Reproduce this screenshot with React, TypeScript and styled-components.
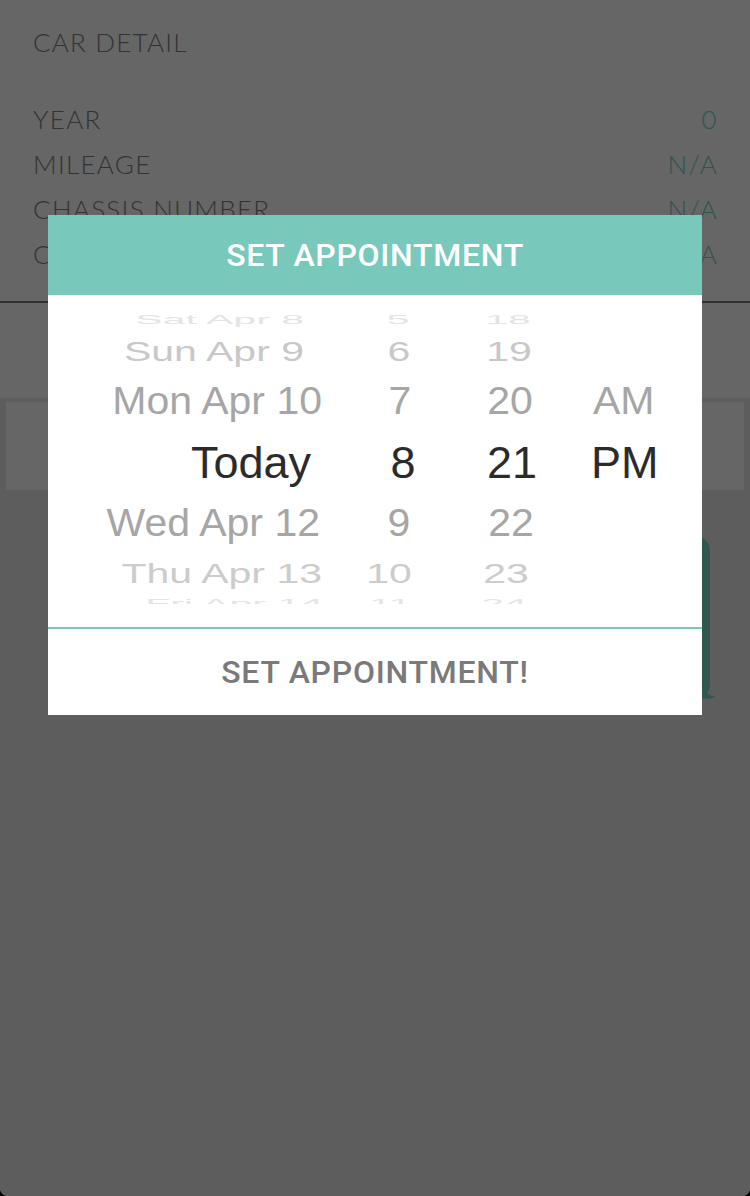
import React from "react";
import styled, { createGlobalStyle } from "styled-components";

const GlobalStyle = createGlobalStyle`
  html, body {
    margin: 0;
    padding: 0;
    background: #000;
  }
  * { box-sizing: border-box; }
`;

const Page = styled.div`
  position: relative;
  width: 750px;
  height: 1196px;
  overflow: hidden;
  background: #e9e9e9;
  border-radius: 0 0 8px 8px;
  display: flex;
  flex-direction: column;
  font-family: Lato, "Liberation Sans", sans-serif;
`;

const DetailSection = styled.section`
  background: #fff;
  padding: 27px 33px 25px;
  border-bottom: 2px solid #7c7c7c;
`;

const SectionTitle = styled.h2`
  margin: 0 0 39px;
  height: 30px;
  line-height: 30px;
  font-size: 26px;
  font-weight: 300;
  color: #808080;
  letter-spacing: 1.2px;
`;

const DetailRow = styled.div`
  display: flex;
  justify-content: space-between;
  align-items: center;
  height: 45px;
  font-size: 26px;
  font-weight: 300;
  letter-spacing: 1.3px;
`;

const Label = styled.span`
  color: #808080;
`;

const Value = styled.span`
  color: #74d2c0;
  margin-right: -1px;
`;

const WhiteStrip = styled.div`
  height: 95px;
  background: #fff;
`;

const LowerArea = styled.div`
  flex: 1;
  padding: 4px 6px 0;
  display: flex;
  flex-direction: column;
`;

const InputCard = styled.div`
  height: 88px;
  background: #fff;
`;

const Bubble = styled.div`
  position: relative;
  margin: 45px 0 0 54px;
  width: 650px;
  height: 165px;
  background: #7ad9c8;
  border-radius: 16px;
`;

const BubbleTail = styled.svg`
  position: absolute;
  right: -8px;
  bottom: 0;
  width: 20px;
  height: 26px;
`;

const Overlay = styled.div`
  position: absolute;
  inset: 0;
  background: rgba(0, 0, 0, 0.6);
`;

const Modal = styled.div`
  position: absolute;
  left: 48px;
  top: 215px;
  width: 654px;
  background: #fff;
  display: flex;
  flex-direction: column;
`;

const ModalHeader = styled.div`
  height: 80px;
  background: #78c9bc;
  display: flex;
  align-items: center;
  justify-content: center;
  color: #fff;
  font-family: Roboto, "Liberation Sans", sans-serif;
  font-weight: 500;
  font-size: 32px;
  letter-spacing: 0.7px;
`;

const Picker = styled.div`
  height: 334px;
  padding-top: 17px;
  border-bottom: 2px solid #78c9bc;
  font-family: "Liberation Sans", Arial, sans-serif;
`;

const Wheel = styled.div`
  height: 292px;
  overflow: hidden;
  display: grid;
  grid-template-columns: 272px 162px 56px 1fr;
`;

const WheelColumn = styled.div<{ $pad?: number }>`
  display: flex;
  flex-direction: column;
  margin-top: -2px;
  padding-left: ${(p) => p.$pad ?? 0}px;
`;

const WheelItem = styled.div<{
  $h: number;
  $size: number;
  $color: string;
  $sy: number;
  $dx: number;
  $align: string;
}>`
  height: ${(p) => p.$h}px;
  flex: none;
  display: flex;
  align-items: center;
  justify-content: ${(p) => p.$align};
  font-size: ${(p) => p.$size}px;
  line-height: 1;
  color: ${(p) => p.$color};
  white-space: nowrap;
  transform: translateX(${(p) => p.$dx}px) scaleY(${(p) => p.$sy});
`;

const Footer = styled.button`
  height: 86px;
  border: 0;
  background: #fff;
  display: flex;
  align-items: center;
  justify-content: center;
  color: #7a7a7a;
  font-family: Roboto, "Liberation Sans", sans-serif;
  font-weight: 500;
  font-size: 32px;
  letter-spacing: 0.75px;
  padding: 0;
  cursor: pointer;
`;

const rowHeights = [20, 42, 58, 64, 58, 42, 20];
const rowScale = [0.3, 0.68, 0.93, 1, 0.93, 0.68, 0.3];
const rowColor = ["#e4e4e4", "#c8c8c8", "#a6a6a6", "#2b2b2b", "#a6a6a6", "#cccccc", "#e4e4e4"];
const rowSize = [41, 41, 41, 45, 41, 41, 41];

type Col = { items: string[]; dx: number[]; align: string; pad?: number };

const columns: Col[] = [
  {
    items: ["Sat Apr 8", "Sun Apr 9", "Mon Apr 10", "Today", "Wed Apr 12", "Thu Apr 13", "Fri Apr 14"],
    dx: [-16, -16, 2, -9, 0, 2, 3],
    align: "flex-end",
  },
  {
    items: ["5", "6", "7", "8", "9", "10", "11"],
    dx: [-3, -2, -1, 2, -2, -12, -11],
    align: "center",
  },
  {
    items: ["18", "19", "20", "21", "22", "23", "24"],
    dx: [-2, -1, 0, 2, 1, -4, -6],
    align: "center",
  },
  {
    items: ["", "", "AM", "PM", "", "", ""],
    dx: [0, 0, 1, -1, 0, 0, 0],
    align: "flex-start",
    pad: 54,
  },
];

const details: [string, string][] = [
  ["YEAR", "0"],
  ["MILEAGE", "N/A"],
  ["CHASSIS NUMBER", "N/A"],
  ["COLOR", "N/A"],
];

export default function App() {
  return (
    <>
      <GlobalStyle />
      <Page>
        <DetailSection>
          <SectionTitle>CAR DETAIL</SectionTitle>
          {details.map(([l, v]) => (
            <DetailRow key={l}>
              <Label>{l}</Label>
              <Value>{v}</Value>
            </DetailRow>
          ))}
        </DetailSection>
        <WhiteStrip />
        <LowerArea>
          <InputCard />
          <Bubble>
            <BubbleTail viewBox="0 0 20 26">
              <path d="M0 0 C1 12 5 20 18 23 C10 26 4 25 0 22 Z" fill="#7ad9c8" />
            </BubbleTail>
          </Bubble>
        </LowerArea>
        <Overlay />
        <Modal>
          <ModalHeader>SET APPOINTMENT</ModalHeader>
          <Picker>
            <Wheel>
              {columns.map((col, ci) => (
                <WheelColumn key={ci} $pad={col.pad}>
                  {col.items.map((t, i) => (
                    <WheelItem
                      key={i}
                      $h={rowHeights[i]}
                      $size={rowSize[i]}
                      $color={rowColor[i]}
                      $sy={rowScale[i]}
                      $dx={col.dx[i]}
                      $align={col.align}
                    >
                      {t}
                    </WheelItem>
                  ))}
                </WheelColumn>
              ))}
            </Wheel>
          </Picker>
          <Footer>SET APPOINTMENT!</Footer>
        </Modal>
      </Page>
    </>
  );
}
